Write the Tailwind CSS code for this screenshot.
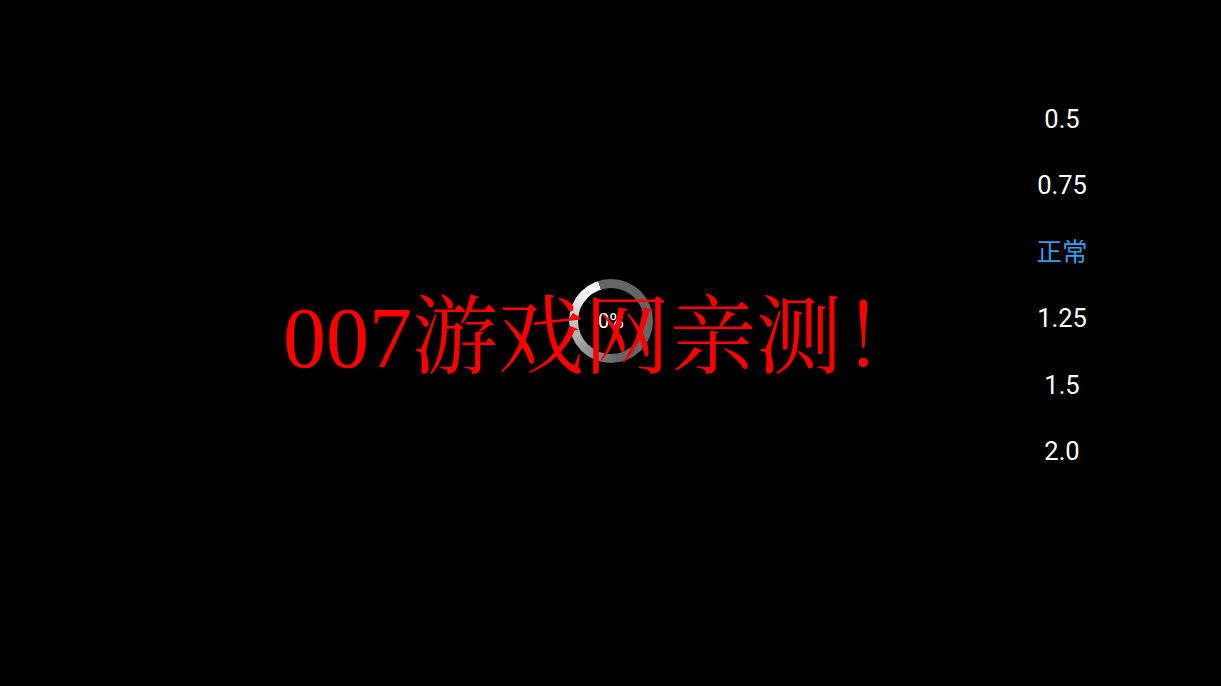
<!DOCTYPE html>
<html lang="en">
<head>
  <meta charset="UTF-8">
  <title>007</title>
  <script src="https://cdn.jsdelivr.net/npm/@tailwindcss/browser@4"></script>
</head>
<body class="bg-black">
<div class="relative w-[1221px] h-[686px] overflow-hidden bg-black font-['Roboto','Noto_Sans_CJK_SC',sans-serif]">

  <!-- speed list -->
  <div class="flex justify-end pt-[86px] pr-[79px]">
    <ul class="w-[160px] text-center text-[25.5px] text-white">
      <li class="h-[66.4px] leading-[66.4px]">0.5</li>
      <li class="h-[66.4px] leading-[66.4px]">0.75</li>
      <li class="h-[66.4px] leading-[66.4px] text-[#2f9fe8]">正常</li>
      <li class="h-[66.4px] leading-[66.4px]">1.25</li>
      <li class="h-[66.4px] leading-[66.4px]">1.5</li>
      <li class="h-[66.4px] leading-[66.4px]">2.0</li>
    </ul>
  </div>

  <!-- loading ring -->
  <div class="absolute left-[569px] top-[279px] w-[84px] h-[84px] rounded-full p-[9px] bg-[conic-gradient(from_-18deg,#666_0deg,#666_190deg,#fff_345deg,#fff_360deg)]">
    <div class="w-full h-full rounded-full bg-black flex items-center justify-center text-[20px] text-white">0%</div>
  </div>

  <!-- watermark -->
  <div class="absolute left-[283px] top-[288px] whitespace-nowrap text-[86px] leading-[100px] text-[#ff0000] font-['Liberation_Serif','Noto_Serif_CJK_SC','Noto_Sans_CJK_SC',serif]">007游戏网亲测！</div>
</div>
</body>
</html>
